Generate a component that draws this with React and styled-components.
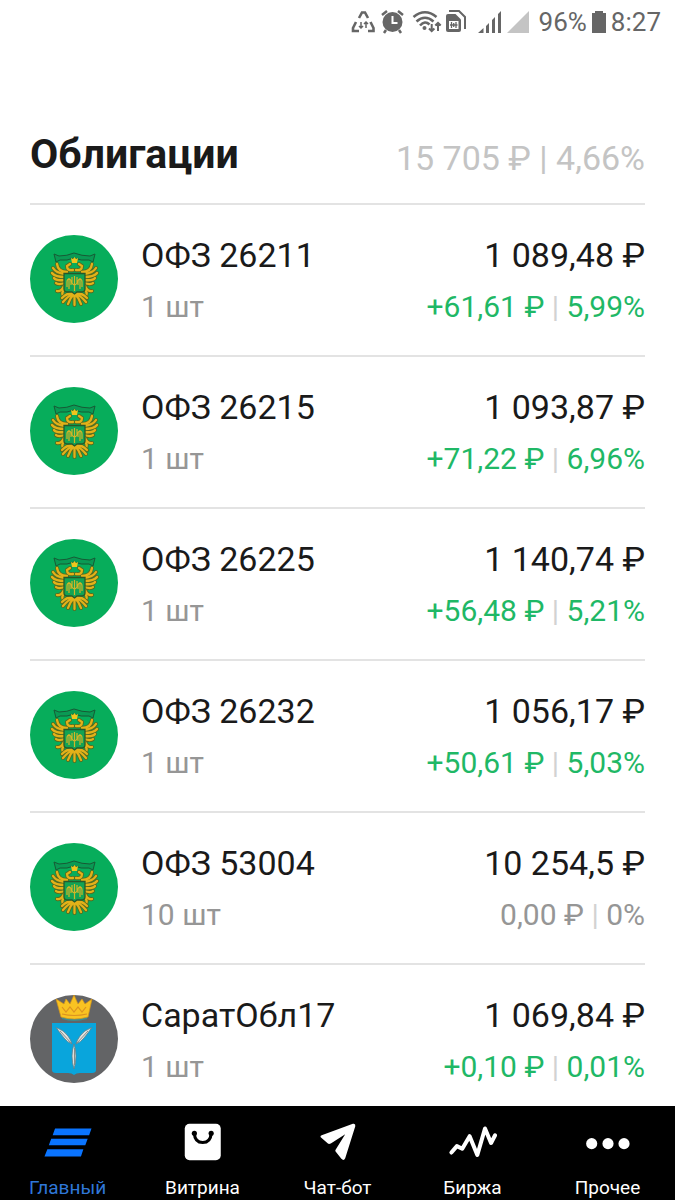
import React from "react";
import styled, { createGlobalStyle } from "styled-components";

const GlobalStyle = createGlobalStyle`
  *, *::before, *::after { box-sizing: border-box; }
  body {
    margin: 0;
    background: #fff;
    color: #1a1a1a;
    font-family: Roboto, "Liberation Sans", sans-serif;
  }
`;

const Screen = styled.div`
  display: flex;
  flex-direction: column;
  height: 100vh;
  overflow: hidden;
`;

const StatusBar = styled.header`
  flex: none;
  display: flex;
  align-items: center;
  justify-content: flex-end;
  height: 44px;
  padding-right: 14px;
  color: #666;
  font-size: 26px;
  line-height: 32px;
`;

const StatusIcons = styled.svg`
  display: block;
  width: 180px;
  height: 28px;
  margin-right: 8px;
`;

const Battery = styled.svg`
  display: block;
  width: 16px;
  height: 24px;
  margin: 0 4px;
`;

const Main = styled.main`
  flex: 1;
  min-height: 0;
  overflow: hidden;
  padding: 76px 30px 0;
`;

const SectionHead = styled.div`
  display: flex;
  align-items: flex-start;
  justify-content: space-between;
  height: 85px;
  padding-top: 10px;
  border-bottom: 2px solid #e3e3e3;
`;

const Title = styled.h1`
  margin: 0;
  font-size: 41px;
  font-weight: 700;
  line-height: 48px;
`;

const Total = styled.div`
  color: #c4c4c4;
  font-size: 34px;
  line-height: 56px;
  white-space: nowrap;
`;

const List = styled.ul`
  margin: 0;
  padding: 0;
  list-style: none;
`;

const Row = styled.li`
  display: flex;
  align-items: flex-start;
  height: 152px;
  padding-top: 30px;
  border-bottom: 2px solid #e3e3e3;
`;

const Avatar = styled.svg`
  flex: none;
  display: block;
  width: 88px;
  height: 88px;
  margin-right: 23px;
`;

const Column = styled.div`
  flex: ${(p) => (p.$end ? "none" : "1")};
  text-align: ${(p) => (p.$end ? "right" : "left")};
  white-space: nowrap;
`;

const Primary = styled.div`
  font-size: 34px;
  line-height: 40px;
`;

const Secondary = styled.div`
  margin-top: 14px;
  color: ${(p) => (p.$gain ? "#1fb866" : "#969696")};
  font-size: 30px;
  line-height: 36px;
`;

const Bar = styled.span`
  color: #d2d2d2;
`;

const TabBar = styled.nav`
  flex: none;
  display: flex;
  height: 94px;
  background: #000;
`;

const Tab = styled.a`
  flex: 1;
  display: flex;
  flex-direction: column;
  align-items: center;
  padding-top: 12px;
  color: ${(p) => (p.$active ? "#2f77d8" : "#fff")};
  font-size: 19px;
  line-height: 24px;
  text-decoration: none;
`;

const TabIcon = styled.svg`
  display: block;
  width: 54px;
  height: 50px;
  margin-bottom: 10px;
`;

const WING = "M37 37Q28 37 27 29M35 39Q26 38 23 33M35 42Q25 42 22 38M35 45Q26 46 24 43M35 48Q28 50 26 48M34 51Q31 57 27 56M35 54Q31 57 33 61M43 35Q37 36 37 31L40 29";

const Wing = ({ mirrored }) => (
  <g fill="none" strokeLinecap="round" transform={mirrored ? "translate(89 0) scale(-1 1)" : undefined}>
    <path d={WING} stroke="#546b20" strokeWidth="4" />
    <path d={WING} stroke="#e3b119" strokeWidth="2.300" />
  </g>
);

const TAIL = "M43 58Q37 58 32 63M43 59Q38 61 33 67M44 59Q40 63 38 69M44.500 59V70M45 59Q49 63 51 69M46 59Q51 61 56 67M46 58Q52 58 57 63";

const GreenCoat = () => (
  <Avatar viewBox="0 0 88 88" aria-hidden="true">
    <circle cx="44" cy="44" r="44" fill="#07ad5b" />
    <path d="M24 19L29 21Q37 21 44 18Q52 21 60 21L65 19L63 27L59 25Q51 26 44 23Q37 26 30 25L26 27Z" fill="#0a9a54" stroke="#175a35" />
    <Wing />
    <Wing mirrored />
    <g fill="none" strokeLinecap="round">
      <path d={TAIL} stroke="#546b20" strokeWidth="4" />
      <path d={TAIL} stroke="#e3b119" strokeWidth="2.300" />
    </g>
    <path d="M41 23l2 1 1.500-2 1.500 2 2-1-1 5h-5z" fill="#f0c51c" />
    <path d="M34 38.500H55V54Q55 57 51 57H47L44.500 59L42 57H38Q34 57 34 54Z" fill="#12a354" stroke="#27582a" strokeWidth="1.300" />
    <path d="M39 43v11M50 43v11M44.500 41v15M42 42v6q2.500 4 5 0v-6M37 52v-5q0-3 2-3t2 3v3M52 52v-5q0-3-2-3t-2 3v3" fill="none" stroke="#d3b527" strokeWidth="1.200" />
  </Avatar>
);

const SaratovCoat = () => (
  <Avatar viewBox="0 0 88 88" aria-hidden="true">
    <circle cx="44" cy="44" r="44" fill="#636466" />
    <path d="M22 28H66V75Q66 78 62 78H50Q46 78 44 80Q42 78 38 78H26Q22 78 22 75Z" fill="#09a5dc" />
    <path d="M32 21Q44 24 57 21V24Q44 28 32 24Z" fill="#3d8c91" />
    <path d="M31 22L26 4L34 9L36 4L40 9L44 0L48 9L52 4L55 9L62 4L58 22Q44 26 31 22Z" fill="#f9c322" stroke="#d6951a" strokeWidth=".700" />
    <path d="M32 19Q44 22 57 19M32 12l4 5 4-5 4 5 4-5 4 5 4-5" fill="none" stroke="#dc9320" strokeWidth="1.200" />
    <g stroke="#5b7f8c" strokeWidth=".800" fill="#dfe1df">
      <path d="M26 32.500Q34 35 38 41Q41 45 42 49Q37 47 34 43Q30 38 26 32.500Z" />
      <path d="M62 32.500Q54 35 50 41Q47 45 46 49Q51 47 54 43Q58 38 62 32.500Z" />
      <path d="M44 49Q46 55 46 61Q46 68 44 74Q42 68 42 61Q42 55 44 49Z" />
    </g>
    <path d="M30 36L41 48M58 36L47 48M44.500 53V70" fill="none" stroke="#8a8d88" />
  </Avatar>
);

const bonds = [
  { name: "ОФЗ 26211", count: "1 шт", price: "1 089,48 ₽", change: "+61,61 ₽", percent: "5,99%", gain: true, Coat: GreenCoat },
  { name: "ОФЗ 26215", count: "1 шт", price: "1 093,87 ₽", change: "+71,22 ₽", percent: "6,96%", gain: true, Coat: GreenCoat },
  { name: "ОФЗ 26225", count: "1 шт", price: "1 140,74 ₽", change: "+56,48 ₽", percent: "5,21%", gain: true, Coat: GreenCoat },
  { name: "ОФЗ 26232", count: "1 шт", price: "1 056,17 ₽", change: "+50,61 ₽", percent: "5,03%", gain: true, Coat: GreenCoat },
  { name: "ОФЗ 53004", count: "10 шт", price: "10 254,5 ₽", change: "0,00 ₽", percent: "0%", gain: false, Coat: GreenCoat },
  { name: "СаратОбл17", count: "1 шт", price: "1 069,84 ₽", change: "+0,10 ₽", percent: "0,01%", gain: true, Coat: SaratovCoat },
];

const tabs = [
  {
    label: "Главный",
    active: true,
    icon: <path d="M13.500 11H51.500L49 18H11ZM9.500 21.500H47.500L45 28.500H7ZM5.500 32.500H43L40.500 40H2.500Z" fill="#0a74ff" />,
  },
  {
    label: "Витрина",
    icon: (
      <>
        <rect x="8" y="6" width="37.500" height="38" rx="5" fill="#fff" />
        <path d="M18 16Q18.500 25.500 26.700 25.500T35.500 16" stroke="#000" strokeWidth="3.200" fill="none" />
        <circle cx="18" cy="16" r="2.700" />
        <circle cx="35.500" cy="16" r="2.700" />
      </>
    ),
  },
  {
    label: "Чат-бот",
    icon: <path d="M10 18L42.500 6Q45.500 5.300 45 8.500L34.500 42Q33 45 30.500 42.500L24.500 35Q23.800 34 24.500 33L34.500 17L19.500 26.500Q17.500 27.500 16.500 26.500L9 20Q8 18.700 10 18Z" fill="#fff" />,
  },
  {
    label: "Биржа",
    icon: <path d="M4.500 36L10.200 29.300L15.800 32L23.500 19L31.500 38.500L39.500 11L45.800 26L50 18" fill="none" stroke="#fff" strokeWidth="4.200" strokeLinecap="round" strokeLinejoin="round" />,
  },
  {
    label: "Прочее",
    icon: (
      <g fill="#fff">
        <circle cx="10" cy="26.700" r="5.800" />
        <circle cx="27" cy="26.700" r="5.800" />
        <circle cx="43.700" cy="26.700" r="5.800" />
      </g>
    ),
  },
];

export default function App() {
  return (
    <>
      <GlobalStyle />
      <Screen>
        <StatusBar>
          <StatusIcons viewBox="350 8 180 28" aria-hidden="true">
            <g fill="none" stroke="#666" strokeWidth="2.600">
              <path d="M358 18L361 12.500H364L367 18M369.500 22L372.500 28V31H367M358 31H352V28L355 22" />
              <path d="M360 22v6M358 26l2 2 2-2M365 28v-6M363 24l2-2 2 2" strokeWidth="1.500" />
              <path d="M412.500 17Q424 7.500 435.500 17M415.500 21.500Q424 14 432.500 21.500M419 25.500Q424 20 428.500 24.500" />
              <path d="M430.700 24v7M428 28.500l2.700 2.700 2.700-2.700M437 31v-8M434.300 25.500l2.700-2.700 2.700 2.700" strokeWidth="2" />
              <path d="M448 11H458L464 17V29" strokeWidth="2" />
            </g>
            <g fill="#666">
              <circle cx="391.500" cy="22" r="10" />
              <circle cx="423.500" cy="28" r="2" />
              <path d="M445 16Q445 14 447 14H454.500L460 19.500V30Q460 32 458 32H447Q445 32 445 30Z" />
              <path d="M477 33L482.500 28V33ZM485 26L488 23V33H485ZM491 20L494 17V33H491ZM497 14L500 11V33H497Z" />
            </g>
            <path d="M391.500 16v7h5" stroke="#fff" strokeWidth="2" fill="none" />
            <path d="M448 21H457.500V29H448Z" fill="#fff" />
            <path d="M450.500 22v6M455 22v6M449 25h7.500M452.700 23v4" stroke="#666" strokeWidth="1.300" />
            <path d="M381 15l5-4M402 15l-5-4M385 30l-2 3M398 30l2 3" stroke="#666" strokeWidth="2.500" />
            <path d="M506 33L528 11V33Z" fill="#c4c4c4" />
          </StatusIcons>
          <span>96%</span>
          <Battery viewBox="0 0 16 24" aria-hidden="true">
            <path d="M4 1H12V3H15V23H1V3H4Z" fill="#666" />
          </Battery>
          <span>8:27</span>
        </StatusBar>
        <Main>
          <SectionHead>
            <Title>Облигации</Title>
            <Total>15 705 ₽ | 4,66%</Total>
          </SectionHead>
          <List>
            {bonds.map(({ name, count, price, change, percent, gain, Coat }) => (
              <Row key={name}>
                <Coat />
                <Column>
                  <Primary>{name}</Primary>
                  <Secondary>{count}</Secondary>
                </Column>
                <Column $end>
                  <Primary>{price}</Primary>
                  <Secondary $gain={gain}>
                    {change} <Bar>|</Bar> {percent}
                  </Secondary>
                </Column>
              </Row>
            ))}
          </List>
        </Main>
        <TabBar>
          {tabs.map(({ label, active, icon }) => (
            <Tab key={label} href="#" $active={active} aria-current={active ? "page" : undefined}>
              <TabIcon viewBox="0 0 54 50" aria-hidden="true">{icon}</TabIcon>
              {label}
            </Tab>
          ))}
        </TabBar>
      </Screen>
    </>
  );
}
